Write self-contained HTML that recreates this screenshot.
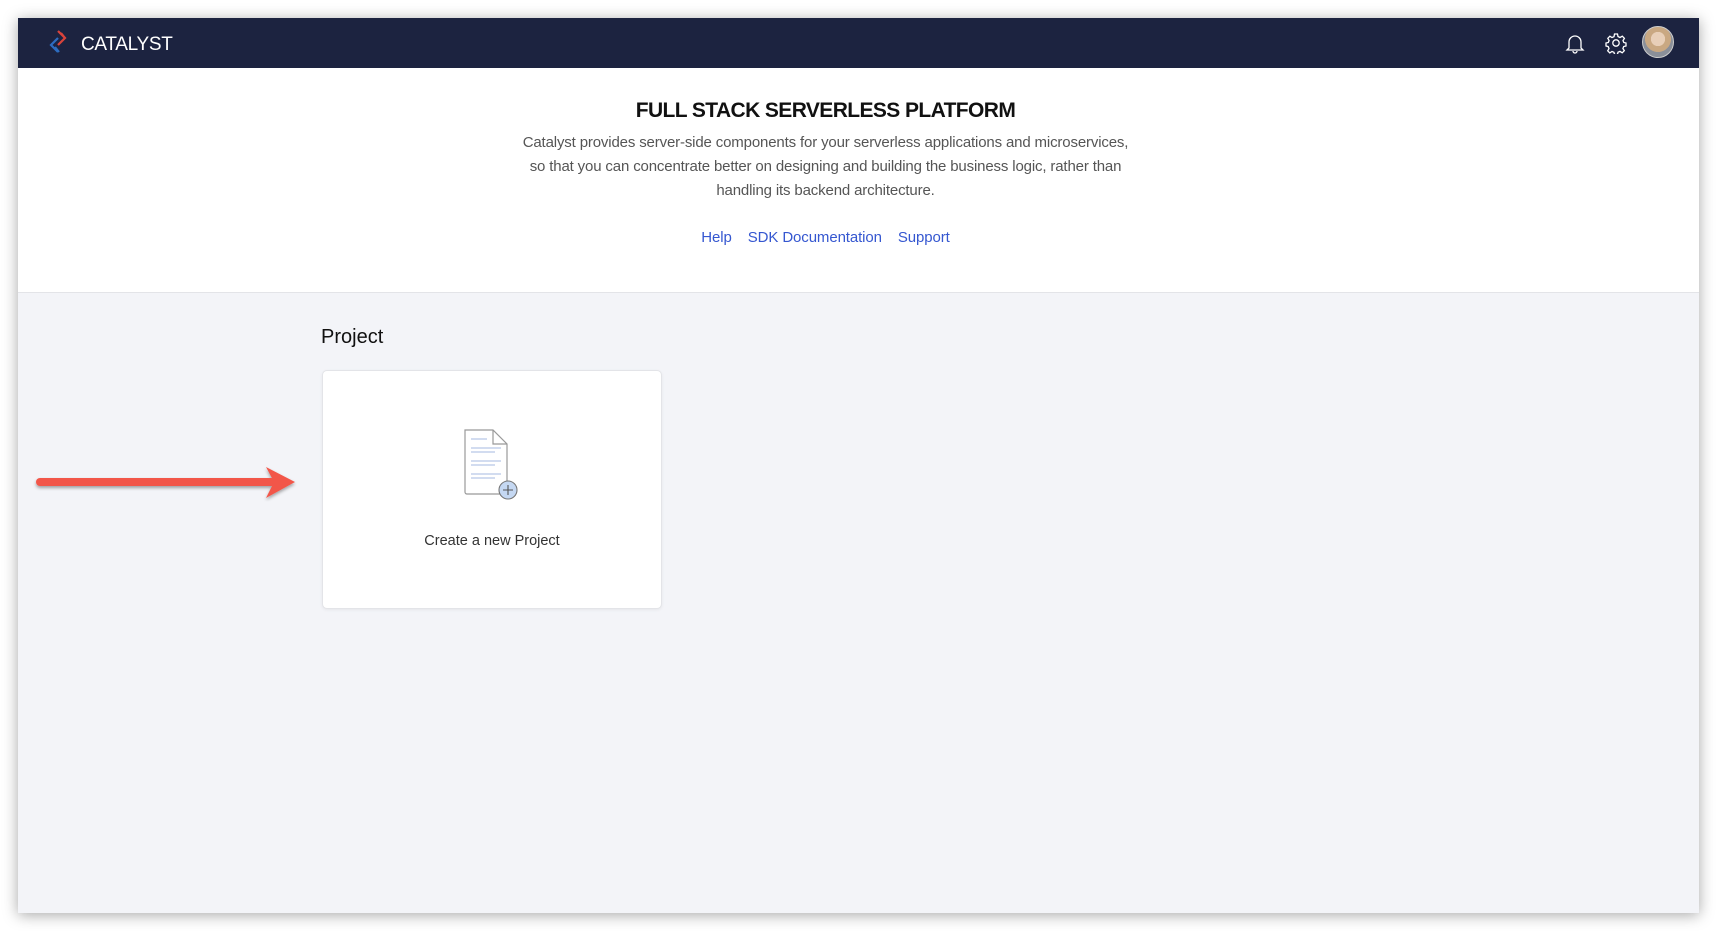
<!DOCTYPE html>
<html><head><meta charset="utf-8"><style>
*{margin:0;padding:0;box-sizing:border-box}
body{width:1717px;height:931px;background:#fff;position:relative;overflow:hidden;font-family:"Liberation Sans",sans-serif}
.win{position:absolute;left:18px;top:18px;width:1681px;height:895px;background:#f3f4f8;box-shadow:0 2px 14px rgba(0,0,0,.35)}
.hdr{position:absolute;left:0;top:0;width:100%;height:50px;background:#1c2340}
.logo{position:absolute;left:63px;top:16px;color:#fff;font-size:19px;letter-spacing:-.3px}
.hero{position:absolute;left:0;top:50px;width:100%;height:225px;background:#fff;text-align:center;border-bottom:1px solid #e3e4e8}
.in{position:absolute;left:0;top:0;width:1615px;height:100%}
h1{position:absolute;width:100%;top:31px;font-size:21px;font-weight:bold;color:#111;letter-spacing:-.6px}
.p{position:absolute;width:100%;top:63px;font-size:15px;line-height:24px;color:#555;letter-spacing:-.15px}
.links{position:absolute;left:0;width:100%;top:161px;font-size:15px;color:#3557d0;letter-spacing:-.1px}
.links span{margin:0 8px}
.proj{position:absolute;left:303px;top:308px;font-size:20px;color:#111}
.card{position:absolute;left:304px;top:352px;width:340px;height:239px;background:#fff;border:1px solid #e3e4e8;border-radius:5px;box-shadow:0 1px 3px rgba(0,0,0,.06)}
.ct{position:absolute;width:100%;top:162px;text-align:center;font-size:14.5px;color:#333}
</style></head><body>
<div class="win">
<div class="hdr">
<svg style="position:absolute;left:28px;top:10px" width="26" height="28" viewBox="0 0 26 28">
<path d="M12 3l7 7-7 7" fill="none" stroke="#d9433b" stroke-width="2.2"/>
<path d="M15 5l4 5" fill="none" stroke="#d9433b" stroke-width="2.2"/>
<path d="M12 10l-7 7 7 7" fill="none" stroke="#2d6cc0" stroke-width="2.2"/>
<path d="M9 19l4 5" fill="none" stroke="#2d6cc0" stroke-width="2.2"/>
</svg>
<div class="logo">CATALYST</div>
<svg style="position:absolute;left:1546px;top:14px" width="22" height="22" viewBox="0 0 22 22" fill="none" stroke="#fff" stroke-width="1.3"><path d="M5 16V10a6 6 0 0112 0v6l2 2H3z"/><path d="M9 19a2 2 0 004 0"/></svg>
<svg style="position:absolute;left:1587px;top:14px" width="22" height="22" viewBox="0 0 22 22" fill="none" stroke="#fff" stroke-width="1.3"><circle cx="11" cy="11" r="3.2"/><path d="M9.5 2h3l.5 2.5 2 1 2.3-1.3 2.1 2.1L18 8.6l.8 1.9 2.2.5v3l-2.3.5-.8 2 1.4 2.2-2.1 2.1-2.2-1.4-2 .8-.5 2.3h-3L9 20.3l-2-.8-2.2 1.4-2.1-2.1L4 16.6l-.8-2L1 14v-3l2.3-.5.8-2L2.8 6.3l2.1-2.1L7 5.5l2-.8z"/></svg>
<div style="position:absolute;left:1624px;top:8px;width:32px;height:32px;border-radius:50%;background:radial-gradient(circle at 50% 40%,#e8cfb8 0 30%,#c9a882 31% 55%,#8a8f99 56%);border:1px solid #ccc"></div>
</div>
<div class="hero"><div class="in">
<h1>FULL STACK SERVERLESS PLATFORM</h1>
<div class="p">Catalyst provides server-side components for your serverless applications and microservices,<br>so that you can concentrate better on designing and building the business logic, rather than<br>handling its backend architecture.</div>
<div class="links"><span>Help</span><span>SDK Documentation</span><span>Support</span></div>
</div></div>
<div class="proj">Project</div>
<div class="card">
<svg style="position:absolute;left:138px;top:57px" width="62" height="72" viewBox="0 0 62 72" fill="none">
<path d="M4 2h28l14 14v50H6a2 2 0 01-2-2z" stroke="#999" stroke-width="1.2" fill="#fff"/>
<path d="M32 2v14h14" stroke="#999" stroke-width="1.2"/>
<g stroke="#b8c8e6" stroke-width="1.2"><path d="M10 11h16M10 20h30M10 24h24M10 33h30M10 37h24M10 46h30M10 50h24"/></g>
<circle cx="47" cy="62" r="9" fill="#c5d8f2" stroke="#777" stroke-width="1.1"/>
<path d="M47 57v10M42 62h10" stroke="#555" stroke-width="1.1"/>
</svg>
<div class="ct">Create a new Project</div>
</div>
</div>
<svg style="position:absolute;left:30px;top:462px" width="270" height="42" viewBox="0 0 270 42">
<defs><filter id="s"><feDropShadow dx="0" dy="2" stdDeviation="1.5" flood-opacity=".35"/></filter></defs>
<g filter="url(#s)" fill="#f2574a"><rect x="6" y="16" width="240" height="8" rx="4"/><path d="M236 5l29 15-29 16 8-16z"/></g>
</svg>
</body></html>
